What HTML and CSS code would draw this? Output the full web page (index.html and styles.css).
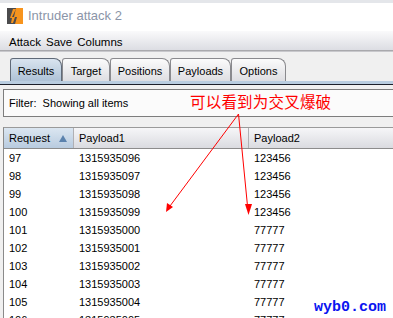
FILE: index.html
```html
<!DOCTYPE html>
<html>
<head>
<meta charset="utf-8">
<link rel="stylesheet" href="styles.css">
</head>
<body>
<div class="frame">
  <div class="topstrip"></div>
  <div class="titlebar">
    <svg class="appicon" width="16" height="16" viewBox="0 0 16 16">
      <rect x="0" y="0" width="16" height="16" fill="#4b4b4d"/>
      <polygon points="9,0 16,0 16,16 8,16 10,9 7,9" fill="#f7941d"/>
      <polygon points="9,1 5,9 8,9 6,15 4,15 5,10 3,10 6,1" fill="#f7941d"/>
    </svg>
    <span class="title">Intruder attack 2</span>
  </div>
  <div class="menubar">
    <span class="menu">Attack</span>
    <span class="menu">Save</span>
    <span class="menu">Columns</span>
  </div>
  <div class="tabarea">
    <div class="tab active w-results">Results</div>
    <div class="tab w-target">Target</div>
    <div class="tab w-positions">Positions</div>
    <div class="tab w-payloads">Payloads</div>
    <div class="tab w-options">Options</div>
  </div>
  <div class="tabline"></div>
  <div class="content">
    <div class="filter">Filter:&nbsp; Showing all items</div>
    <div class="table">
      <div class="thead">
        <div class="th c1 sorted">Request<span class="sort"></span></div>
        <div class="th c2">Payload1</div>
        <div class="th c3">Payload2</div>
      </div>
      <div class="row"><span class="c1">97</span><span class="c2">1315935096</span><span class="c3">123456</span></div>
      <div class="row"><span class="c1">98</span><span class="c2">1315935097</span><span class="c3">123456</span></div>
      <div class="row"><span class="c1">99</span><span class="c2">1315935098</span><span class="c3">123456</span></div>
      <div class="row"><span class="c1">100</span><span class="c2">1315935099</span><span class="c3">123456</span></div>
      <div class="row"><span class="c1">101</span><span class="c2">1315935000</span><span class="c3">77777</span></div>
      <div class="row"><span class="c1">102</span><span class="c2">1315935001</span><span class="c3">77777</span></div>
      <div class="row"><span class="c1">103</span><span class="c2">1315935002</span><span class="c3">77777</span></div>
      <div class="row"><span class="c1">104</span><span class="c2">1315935003</span><span class="c3">77777</span></div>
      <div class="row"><span class="c1">105</span><span class="c2">1315935004</span><span class="c3">77777</span></div>
      <div class="row"><span class="c1">106</span><span class="c2">1315935005</span><span class="c3">77777</span></div>
    </div>
  </div>
  <div class="note">可以看到为交叉爆破</div>
  <svg class="arrows" width="393" height="318" viewBox="0 0 393 318">
    <line x1="238.5" y1="114" x2="170" y2="206" stroke="#ff0000" stroke-width="1"/>
    <polygon points="166,212 167,203 173,207" fill="#ff0000"/>
    <line x1="238.5" y1="114" x2="247.5" y2="206" stroke="#ff0000" stroke-width="1"/>
    <polygon points="248.5,215 245,204 252,204" fill="#ff0000"/>
  </svg>
  <div class="watermark">wyb0.com</div>
</div>
</body>
</html>
```
FILE: styles.css
```css
html, body {
  margin: 0;
  padding: 0;
}
body {
  width: 393px;
  height: 318px;
  overflow: hidden;
  background: #f0f0f0;
  font-family: "Liberation Sans", Arial, sans-serif;
  font-size: 11px;
  color: #000;
}
.frame {
  position: relative;
  width: 393px;
  height: 318px;
  overflow: hidden;
}
.topstrip {
  height: 3px;
  background: #e4e6ea;
}
.titlebar {
  height: 28px;
  background: #ffffff;
  display: flex;
  align-items: center;
  padding-left: 7px;
  box-sizing: border-box;
  padding-bottom: 3px;
}
.appicon {
  display: block;
}
.title {
  margin-left: 5px;
  font-size: 13px;
  color: #8b95a8;
}
.menubar {
  height: 20px;
  box-sizing: border-box;
  background: linear-gradient(#fafafb, #dcdde3);
  border-bottom: 1px solid #a9a9ad;
  display: flex;
  align-items: center;
  padding: 3px 0 0 9px;
  gap: 5px;
  font-size: 11.5px;
}
.tabarea {
  display: flex;
  padding: 6px 0 0 10px;
  height: 30px;
  box-sizing: border-box;
  border-top: 1px solid #c8c8cc;
}
.tab {
  height: 23px;
  box-sizing: border-box;
  border: 1px solid #8a8a8e;
  border-bottom: none;
  border-radius: 3px 8px 0 0;
  background: linear-gradient(#fbfbfb, #dedee2);
  display: flex;
  align-items: center;
  justify-content: center;
  padding-top: 1px;
  margin-right: 0;
}
.w-results { width: 52px; }
.w-target { width: 48px; }
.w-positions { width: 60px; }
.w-payloads { width: 61px; }
.w-options { width: 55px; }
.tab.active {
  background: linear-gradient(#d9e4ef, #aec2d6);
  border-color: #606a78;
}
.tabline {
  height: 3px;
  background: #b9cde0;
  border-bottom: 1px solid #1c1f2a;
}
.content {
  padding: 4px 0 0 3px;
}
.filter {
  height: 28px;
  box-sizing: border-box;
  border: 1px solid #7d7d7d;
  border-right: none;
  background: #fbfbfb;
  display: flex;
  align-items: center;
  padding-left: 5px;
}
.table {
  margin-top: 10px;
  background: #ffffff;
  border-left: 1px solid #8a8a8a;
  border-top: 1px solid #9a9a9a;
}
.thead {
  display: flex;
  height: 21px;
  box-sizing: border-box;
  border-bottom: 1px solid #8c8c8c;
}
.th {
  display: flex;
  align-items: center;
  padding-left: 5px;
  box-sizing: border-box;
  background: linear-gradient(#f6f6f8, #dadbe0);
  border-right: 1px solid #b0b0b4;
  position: relative;
}
.th.sorted {
  background: linear-gradient(#dbe6f1, #b8cbdf);
}
.sort {
  position: absolute;
  left: 55px;
  top: 7px;
  width: 0;
  height: 0;
  border-left: 4px solid transparent;
  border-right: 4px solid transparent;
  border-bottom: 7px solid #5b82ad;
}
.c1 { width: 70px; flex: none; }
.c2 { width: 175px; flex: none; }
.c3 { flex: 1; }
.th.c3 { border-right: none; }
.row {
  display: flex;
  height: 18px;
  align-items: center;
}
.row span {
  padding-left: 5px;
  box-sizing: border-box;
}
.note {
  position: absolute;
  left: 190px;
  top: 91px;
  font-family: "Noto Sans CJK SC", sans-serif;
  font-size: 15.5px;
  line-height: 20px;
  color: #ff0000;
  letter-spacing: 0.2px;
}
.arrows {
  position: absolute;
  left: 0;
  top: 0;
}
.watermark {
  position: absolute;
  left: 314px;
  top: 299px;
  font-family: "Liberation Mono", "Courier New", monospace;
  font-weight: bold;
  font-size: 15px;
  color: #0a14f0;
}
```
